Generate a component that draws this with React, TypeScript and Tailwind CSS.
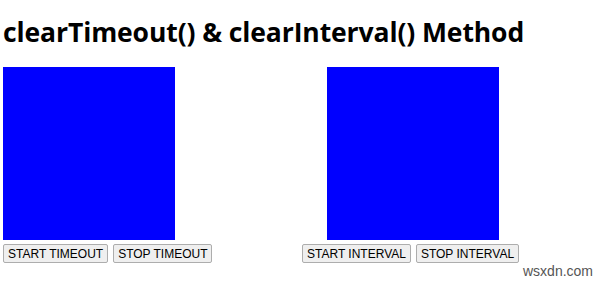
import React from 'react';

const Box: React.FC<{ className?: string }> = ({ className = '' }) => (
    <div className={`w-[172px] h-[173px] bg-[#0000ff] ${className}`} />
);

const Btn: React.FC<{ label: string }> = ({ label }) => (
    <button className="h-[19px] px-[4px] border border-[#adadad] bg-[#efefef] rounded-[2px] text-[12px] leading-none text-black font-['Liberation_Sans',Arial,sans-serif]">
        {label}
    </button>
);

const App: React.FC = () => {
    return (
        <div className="relative w-[600px] h-[285px] bg-white overflow-hidden">
            <h1 className="pl-[3px] pt-[13px] h-[67px] text-[26.5px] font-bold text-black tracking-[-0.1px] font-['Open_Sans',sans-serif]">
                clearTimeout() &amp; clearInterval() Method
            </h1>
            <div className="flex">
                <div className="w-[302px] pl-[3px]">
                    <Box />
                    <div className="flex gap-[5px] mt-[4px]">
                        <Btn label="START TIMEOUT" />
                        <Btn label="STOP TIMEOUT" />
                    </div>
                </div>
                <div>
                    <Box className="ml-[25px]" />
                    <div className="flex gap-[5px] mt-[4px]">
                        <Btn label="START INTERVAL" />
                        <Btn label="STOP INTERVAL" />
                    </div>
                </div>
            </div>
            <span className="absolute left-[523px] top-[261px] text-[14px] text-[#555] font-['Liberation_Sans',Arial,sans-serif]">
                wsxdn.com
            </span>
        </div>
    );
};

export default App;
